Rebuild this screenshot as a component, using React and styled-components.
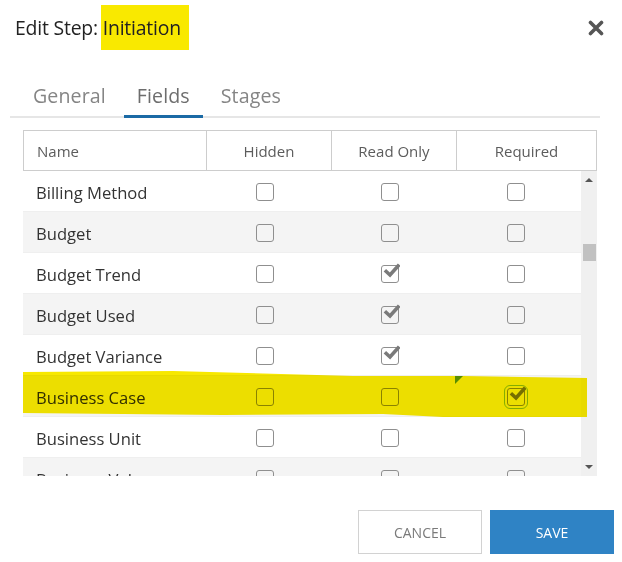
import React from "react";
import styled, { createGlobalStyle } from "styled-components";

const Global = createGlobalStyle`
  html, body { margin: 0; padding: 0; background: #fff; }
  body { font-family: "Open Sans", "Noto Sans", sans-serif; }
  * { box-sizing: border-box; }
`;

const Dialog = styled.div`
  width: 622px;
  height: 562px;
  display: flex;
  flex-direction: column;
  background: #fff;
  overflow: hidden;
`;

const TitleBar = styled.div`
  height: 55px;
  display: flex;
  align-items: center;
  justify-content: space-between;
  padding: 0 18px 0 15px;
`;

const Title = styled.h1`
  margin: 0;
  font-size: 19.4px;
  font-weight: 400;
  color: #222;
  letter-spacing: -0.2px;
`;

const Marker = styled.span`
  background: #f9e900;
  padding: 9px 8px 9px 2px;
  margin-left: -2px;
  mix-blend-mode: multiply;
`;

const CloseButton = styled.button`
  border: 0;
  background: none;
  padding: 0;
  width: 16px;
  height: 16px;
  display: flex;
  cursor: pointer;
`;

const TabStrip = styled.div`
  margin: 20px 22px 0 10px;
  padding-left: 10px;
  display: flex;
  gap: 5px;
  border-bottom: 2px solid #e6e6e6;
`;

const Tab = styled.div`
  padding: 7px 13px 6px;
  font-size: 19.6px;
  color: ${(p) => (p.$active ? "#6d6d6d" : "#858585")};
  border-bottom: 3px solid ${(p) => (p.$active ? "#1b6aa5" : "transparent")};
  margin-bottom: -2px;
  letter-spacing: 0.1px;
`;

const Grid = styled.div`
  margin: 12px 25px 0 23px;
  display: flex;
  flex-direction: column;
`;

const HeaderRow = styled.div`
  display: grid;
  grid-template-columns: 182px 125px 125px 1fr;
  height: 41px;
  border: 1px solid #cdcdcd;
`;

const HeadCell = styled.div`
  display: flex;
  align-items: center;
  justify-content: ${(p) => (p.$left ? "flex-start" : "center")};
  padding-left: ${(p) => (p.$left ? "13px" : "0")};
  font-size: 15px;
  color: #5c5c5c;
  border-left: ${(p) => (p.$left ? "0" : "1px solid #cdcdcd")};
`;

const BodyWrap = styled.div`
  display: flex;
  height: 305px;
  clip-path: inset(0 -8px 0 0);
`;

const Body = styled.div`
  flex: 1;
  min-width: 0;
`;

const Row = styled.div`
  position: relative;
  display: grid;
  grid-template-columns: 182px 125px 125px 1fr;
  height: 41px;
  padding-top: 2px;
  background: ${(p) => (p.$alt ? "#f4f4f4" : "#fff")};
  border-bottom: 1px solid #efefef;
`;

const NameCell = styled.div`
  display: flex;
  align-items: center;
  padding-left: 13px;
  font-size: 16.6px;
  color: #333;
  white-space: nowrap;
`;

const BoxCell = styled.div`
  position: relative;
  display: flex;
  align-items: center;
  justify-content: center;
  padding-right: ${(p) => p.$shift || "2px"};
`;

const Box = styled.span`
  position: relative;
  width: 18px;
  height: 18px;
  border: 1.6px solid #8f8f8f;
  border-radius: 3px;
  background: transparent;
  outline: ${(p) => (p.$focus ? "1px solid #88c040" : "none")};
  outline-offset: 2px;
`;

const Tick = styled.svg`
  position: absolute;
  left: 1px;
  top: -4px;
  width: 17px;
  height: 16px;
`;

const CornerFlag = styled.span`
  position: absolute;
  left: 0;
  top: -2px;
  width: 0;
  height: 0;
  border-top: 8px solid #5b9bd5;
  border-right: 8px solid transparent;
`;

const Highlight = styled.svg`
  position: absolute;
  left: 0;
  top: -5px;
  width: 564px;
  height: 50px;
  mix-blend-mode: multiply;
  pointer-events: none;
  z-index: 3;
`;

const Scrollbar = styled.div`
  width: 16px;
  flex: none;
  background: #f0f0f0;
  display: flex;
  flex-direction: column;
  align-items: center;
  padding-top: 7px;
`;

const Arrow = styled.span`
  width: 0;
  height: 0;
  border-left: 4px solid transparent;
  border-right: 4px solid transparent;
  ${(p) =>
    p.$down
      ? "border-top: 4px solid #555; margin-top: auto; margin-bottom: 7px;"
      : "border-bottom: 4px solid #555;"}
`;

const Thumb = styled.span`
  width: 13px;
  height: 17px;
  background: #c1c1c1;
  margin-top: 62px;
`;

const Footer = styled.div`
  margin-top: auto;
  display: flex;
  justify-content: flex-end;
  gap: 8px;
  padding: 0 8px 8px 0;
`;

const Button = styled.button`
  width: 124px;
  height: 44px;
  font-family: "Open Sans", "Noto Sans", sans-serif;
  font-size: 14px;
  text-transform: uppercase;
  cursor: pointer;
  border: 1px solid ${(p) => (p.$primary ? "#2f83c5" : "#d2d2d2")};
  background: ${(p) => (p.$primary ? "#2f83c5" : "#fff")};
  color: ${(p) => (p.$primary ? "#fff" : "#7a7a7a")};
`;

const Check = ({ checked, focus }) => (
  <Box $focus={focus}>
    {checked ? (
      <Tick viewBox="0 0 17 16">
        <path d="M3.2 9.5 L7 13 L15 4" fill="none" stroke="#7a7a7a" strokeWidth="3.6" strokeLinecap="square" />
      </Tick>
    ) : null}
  </Box>
);

const rows = [
  { name: "Billing Method", v: [false, false, false] },
  { name: "Budget", v: [false, false, false] },
  { name: "Budget Trend", v: [false, true, false] },
  { name: "Budget Used", v: [false, true, false] },
  { name: "Budget Variance", v: [false, true, false] },
  { name: "Business Case", v: [false, false, true], marked: true },
  { name: "Business Unit", v: [false, false, false] },
  { name: "Business Value", v: [false, false, false] },
];

export default function App() {
  return (
    <>
      <Global />
      <Dialog>
        <TitleBar>
          <Title>
            Edit Step: <Marker>Initiation</Marker>
          </Title>
          <CloseButton aria-label="Close">
            <svg width="16" height="16" viewBox="0 0 16 16">
              <path d="M2.5 2.5 L13.5 13.5 M13.5 2.5 L2.5 13.5" stroke="#555" strokeWidth="3.6" strokeLinecap="round" />
            </svg>
          </CloseButton>
        </TitleBar>
        <TabStrip>
          <Tab>General</Tab>
          <Tab $active>Fields</Tab>
          <Tab>Stages</Tab>
        </TabStrip>
        <Grid>
          <HeaderRow>
            <HeadCell $left>Name</HeadCell>
            <HeadCell>Hidden</HeadCell>
            <HeadCell>Read Only</HeadCell>
            <HeadCell>Required</HeadCell>
          </HeaderRow>
          <BodyWrap>
            <Body>
              {rows.map((r, i) => (
                <Row key={r.name} $alt={i % 2 === 1}>
                  <NameCell>{r.name}</NameCell>
                  <BoxCell $shift="6px">
                    <Check checked={r.v[0]} />
                  </BoxCell>
                  <BoxCell $shift="6px">
                    <Check checked={r.v[1]} />
                  </BoxCell>
                  <BoxCell $shift="4px">
                    {r.marked ? <CornerFlag /> : null}
                    <Check checked={r.v[2]} focus={r.marked} />
                  </BoxCell>
                  {r.marked ? (
                    <Highlight viewBox="0 0 564 50" preserveAspectRatio="none">
                      <path
                        d="M0 1 L150 0 L330 5 L440 5 L564 7 L564 46 L420 46 L360 43 L200 44 L0 42 Z"
                        fill="#f7e800"
                      />
                    </Highlight>
                  ) : null}
                </Row>
              ))}
            </Body>
            <Scrollbar>
              <Arrow />
              <Thumb />
              <Arrow $down />
            </Scrollbar>
          </BodyWrap>
        </Grid>
        <Footer>
          <Button>Cancel</Button>
          <Button $primary>Save</Button>
        </Footer>
      </Dialog>
    </>
  );
}
